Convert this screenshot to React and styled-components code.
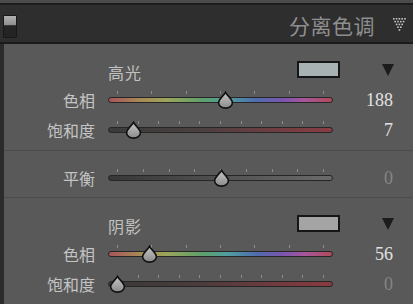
import styled, { createGlobalStyle } from 'styled-components';

const GlobalStyle = createGlobalStyle`
  html, body {
    margin: 0;
    padding: 0;
    background: #595959;
    overflow: hidden;
  }
  body {
    width: 413px;
    height: 304px;
  }
`;

const cjk = `"Noto Sans CJK SC", "Noto Sans", sans-serif`;

const Frame = styled.div`
  width: 413px;
  height: 304px;
  display: flex;
  flex-direction: column;
  background: #595959;
`;

const TopStrip = styled.div`
  height: 3px;
  background: #4b4b4b;
  border-bottom: 2px solid #1c1c1c;
`;

const Header = styled.div`
  height: 37px;
  background: #2e2e2e;
  border-bottom: 2px solid #1a1a1a;
  display: flex;
  align-items: center;
  padding: 0 6px 0 3px;
`;

const Switch = styled.div`
  width: 12px;
  height: 21px;
  margin-top: 5px;
  border: 1px solid #191919;
  border-radius: 1px;
  background: #242424;
  display: flex;
  flex-direction: column;
  div {
    height: 9px;
    background: linear-gradient(#b0b0b0, #8e8e8e);
    border-bottom: 1px solid #3a3a3a;
  }
`;

const Title = styled.div`
  margin-left: auto;
  margin-right: 17px;
  font-family: ${cjk};
  font-size: 21px;
  letter-spacing: 0.5px;
  color: #8f8f8f;
  margin-top: 3px;
`;

const Panel = styled.div`
  flex: 1;
  border-left: 4px solid #2b2b2b;
  display: flex;
  flex-direction: column;
`;

const Section = styled.div`
  padding: ${p => p.$pad};
  border-bottom: ${p => (p.$last ? 'none' : '1px solid #4c4c4c')};
  display: flex;
  flex-direction: column;
`;

const HeadRow = styled.div`
  height: 29px;
  display: grid;
  grid-template-columns: 104px 189px 44px 1fr;
  align-items: center;
`;

const HeadLabel = styled.div`
  grid-column: 2;
  font-family: ${cjk};
  font-size: 16px;
  color: #c2c2c2;
  letter-spacing: 1px;
  margin-top: 2px;
`;

const Swatch = styled.div`
  grid-column: 3;
  width: 39px;
  height: 13px;
  border: 2px solid #161616;
  background: ${p => p.$color};
  margin-top: -2px;
`;

const Arrow = styled.div`
  grid-column: 4;
  justify-self: start;
  margin-left: 41px;
  margin-top: -2px;
  width: 0;
  height: 0;
  border-left: 6px solid transparent;
  border-right: 6px solid transparent;
  border-top: 12px solid #1c1c1c;
`;

const Row = styled.div`
  height: 30px;
  display: grid;
  grid-template-columns: 91px 225px 47px;
  column-gap: 13px;
  align-items: center;
`;

const Label = styled.div`
  text-align: right;
  font-family: ${cjk};
  font-size: 16px;
  color: #c4c4c4;
`;

const Value = styled.div`
  text-align: right;
  font-family: "Liberation Serif", "Times New Roman", serif;
  font-size: 18px;
  color: ${p => (p.$dim ? '#858585' : '#e2e2e2')};
`;

const SliderBox = styled.div`
  position: relative;
  height: 30px;
`;

const Track = styled.div`
  position: absolute;
  left: 0;
  right: 0;
  top: 12px;
  height: 4px;
  border: 1px solid #262626;
  border-radius: 4px;
  background: ${p => p.$bg};
`;

const Ticks = styled.div`
  position: absolute;
  left: 9px;
  right: 9px;
  top: 6px;
  height: 3px;
  display: flex;
  justify-content: space-between;
  span {
    width: 1px;
    height: 3px;
    background: #8c8c8c;
  }
`;

const Thumb = styled.svg`
  position: absolute;
  top: 6px;
  width: 17px;
  height: 18px;
  margin-left: -8.5px;
`;

const HeaderIcon = () => (
  <svg width="15" height="15" viewBox="0 0 15 15" style={{ marginTop: 2 }}>
    {[5, 4, 3, 2, 1].map((n, r) =>
      Array.from({ length: n }).map((_, i) => (
        <rect
          key={`${r}-${i}`}
          x={1 + r * 1.4 + i * 2.8}
          y={1 + r * 2.8}
          width="1.6"
          height="1.6"
          fill="#c4c4c4"
        />
      ))
    )}
  </svg>
);

const HUE =
  'linear-gradient(90deg, #a9545a 0%, #a88a55 14%, #9aa55a 26%, #5ea06c 42%, #4f9f9f 53%, #4f6cae 66%, #7a55b0 78%, #a75599 88%, #b04a5a 100%)';

const Slider = ({ pos, ticks, bg }) => (
  <SliderBox>
    <Ticks>
      {Array.from({ length: ticks }).map((_, i) => (
        <span key={i} />
      ))}
    </Ticks>
    <Track $bg={bg} />
    <Thumb viewBox="0 0 16 17" style={{ left: `${pos}px` }}>
      <defs>
        <linearGradient id="tg" x1="0" y1="0" x2="0" y2="1">
          <stop offset="0" stopColor="#c8c8c8" />
          <stop offset="1" stopColor="#8a8a8a" />
        </linearGradient>
      </defs>
      <path
        d="M8 1.2 C 10 5, 14.5 7.5, 14.5 11 A 6.5 5.2 0 0 1 1.5 11 C 1.5 7.5, 6 5, 8 1.2 Z"
        fill="url(#tg)"
        stroke="#111"
        strokeWidth="1.5"
      />
    </Thumb>
  </SliderBox>
);

const SliderRow = ({ label, value, pos, ticks, bg, dim }) => (
  <Row>
    <Label>{label}</Label>
    <Slider pos={pos} ticks={ticks} bg={bg} />
    <Value $dim={dim}>{value}</Value>
  </Row>
);

export default function App() {
  return (
    <>
      <GlobalStyle />
      <Frame>
        <TopStrip />
        <Header>
          <Switch>
            <div />
          </Switch>
          <Title>分离色调</Title>
          <HeaderIcon />
        </Header>
        <Panel>
          <Section $pad="12px 0 5px">
            <HeadRow>
              <HeadLabel>高光</HeadLabel>
              <Swatch $color="#a8b2b4" />
              <Arrow />
            </HeadRow>
            <SliderRow label="色相" value="188" pos={117} ticks={7} bg={HUE} />
            <SliderRow
              label="饱和度"
              value="7"
              pos={25}
              ticks={11}
              bg="linear-gradient(90deg, #3b3b3b 0%, #4a4040 40%, #8a3c42 100%)"
            />
          </Section>
          <Section $pad="12px 0 4px">
            <SliderRow
              label="平衡"
              value="0"
              pos={113}
              ticks={9}
              bg="linear-gradient(90deg, #383838, #6a6a6a)"
              dim
            />
          </Section>
          <Section $pad="12px 0 0" $last>
            <HeadRow>
              <HeadLabel>阴影</HeadLabel>
              <Swatch $color="#a4a4a4" />
              <Arrow />
            </HeadRow>
            <SliderRow label="色相" value="56" pos={41} ticks={7} bg={HUE} />
            <SliderRow
              label="饱和度"
              value="0"
              pos={9}
              ticks={11}
              bg="linear-gradient(90deg, #3a3a3a 0%, #4a3c3c 40%, #8a3a40 100%)"
              dim
            />
          </Section>
        </Panel>
      </Frame>
    </>
  );
}
